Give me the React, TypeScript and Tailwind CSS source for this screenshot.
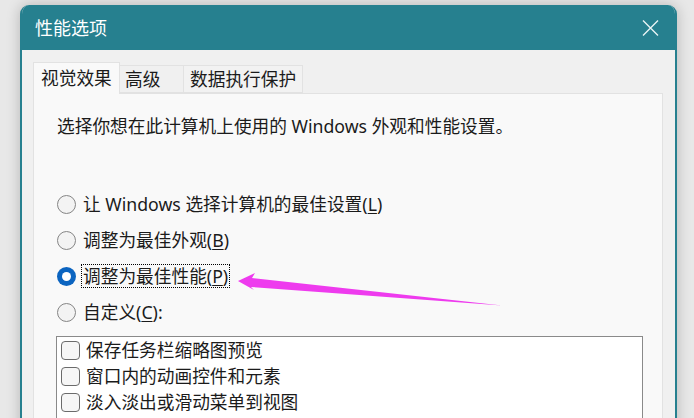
import React from "react";

const font = { fontFamily: '"Noto Sans", "Noto Sans CJK SC", sans-serif' };

interface RadioRowProps {
  label: string;
  accel: string;
  suffix?: string;
  checked?: boolean;
  focused?: boolean;
}

const RadioRow: React.FC<RadioRowProps> = ({ label, accel, suffix, checked, focused }) => {
  return (
    <div className="flex h-[36px] items-center">
      {checked ? (
        <div className="ml-[23px] flex h-[19px] w-[19px] items-center justify-center rounded-full bg-[#0b64c0]">
          <div className="h-[9px] w-[9px] rounded-full bg-white" />
        </div>
      ) : (
        <div className="ml-[23px] h-[19px] w-[19px] rounded-full border border-[#858585] bg-[#f3f3f3]" />
      )}
      <span
        className={
          "ml-[5px] border px-[1px] leading-[22px] " +
          (focused ? "border-dotted border-black" : "border-transparent")
        }
      >
        {label}(<span className="underline underline-offset-2">{accel}</span>){suffix}
      </span>
    </div>
  );
};

const CheckRow: React.FC<{ label: string }> = ({ label }) => {
  return (
    <div className="flex h-[26px] items-center">
      <div className="ml-[4px] h-[19px] w-[19px] rounded-[4px] border border-[#6b6b6b] bg-[#f6f6f6]" />
      <span className="ml-[6px]">{label}</span>
    </div>
  );
};

export default function App() {
  return (
    <div
      className="relative h-[418px] w-[694px] overflow-hidden bg-[#e8e8e8] pl-[20px] pt-[5px] text-[17.7px] text-[#1b1b1b]"
      style={font}
    >
      <div className="flex h-[430px] w-[657px] flex-col overflow-hidden rounded-t-[9px] border-x-2 border-[#26808f] bg-[#f0f0f0] shadow-[0_0_14px_rgba(0,0,0,0.22)]">
        {/* title bar */}
        <div className="flex h-[45px] shrink-0 items-center justify-between bg-[#26808f] pl-[13px] pr-[16px] text-white">
          <span className="text-[18px] leading-none">性能选项</span>
          <svg width="17" height="16" viewBox="0 0 17 16" className="mt-[1px]">
            <path d="M1 0.5 L16 15.5 M16 0.5 L1 15.5" stroke="#e9f3f5" strokeWidth="1.4" fill="none" />
          </svg>
        </div>

        <div className="flex flex-1 flex-col pl-[11px] pt-[12px]">
          {/* tabs */}
          <div className="relative z-10 flex items-end">
            <div className="-mb-px flex h-[32px] w-[87px] items-center border border-b-0 border-[#e2e2e2] bg-[#f9f9f9] pl-[7px]">
              视觉效果
            </div>
            <div className="flex h-[28px] w-[64px] items-center border-y border-r border-[#e2e2e2] bg-[#f0f0f0] pl-[5px]">
              高级
            </div>
            <div className="flex h-[28px] w-[119px] items-center border-y border-r border-[#e2e2e2] bg-[#f2f2f2] pl-[6px]">
              数据执行保护
            </div>
          </div>

          {/* panel */}
          <div className="flex w-[630px] flex-1 flex-col border border-[#e2e2e2] bg-[#f9f9f9] pt-[19px]">
            <p className="h-[26px] pl-[23px] leading-[26px]">选择你想在此计算机上使用的 Windows 外观和性能设置。</p>

            <div className="mt-[47px] flex flex-col">
              <RadioRow label="让 Windows 选择计算机的最佳设置" accel="L" />
              <RadioRow label="调整为最佳外观" accel="B" />
              <RadioRow label="调整为最佳性能" accel="P" checked focused />
              <RadioRow label="自定义" accel="C" suffix=":" />
            </div>

            <div className="ml-[22px] mt-[6px] flex h-[120px] w-[587px] flex-col border border-[#8a8a8a] bg-white">
              <CheckRow label="保存任务栏缩略图预览" />
              <CheckRow label="窗口内的动画控件和元素" />
              <CheckRow label="淡入淡出或滑动菜单到视图" />
            </div>
          </div>
        </div>
      </div>

      {/* annotation arrow */}
      <svg className="pointer-events-none absolute left-0 top-0" width="694" height="418" viewBox="0 0 694 418">
        <polygon
          points="238,281 255,273 252,278 502,305.5 251,287 254,290"
          fill="#ee3bee"
        />
      </svg>
    </div>
  );
}
